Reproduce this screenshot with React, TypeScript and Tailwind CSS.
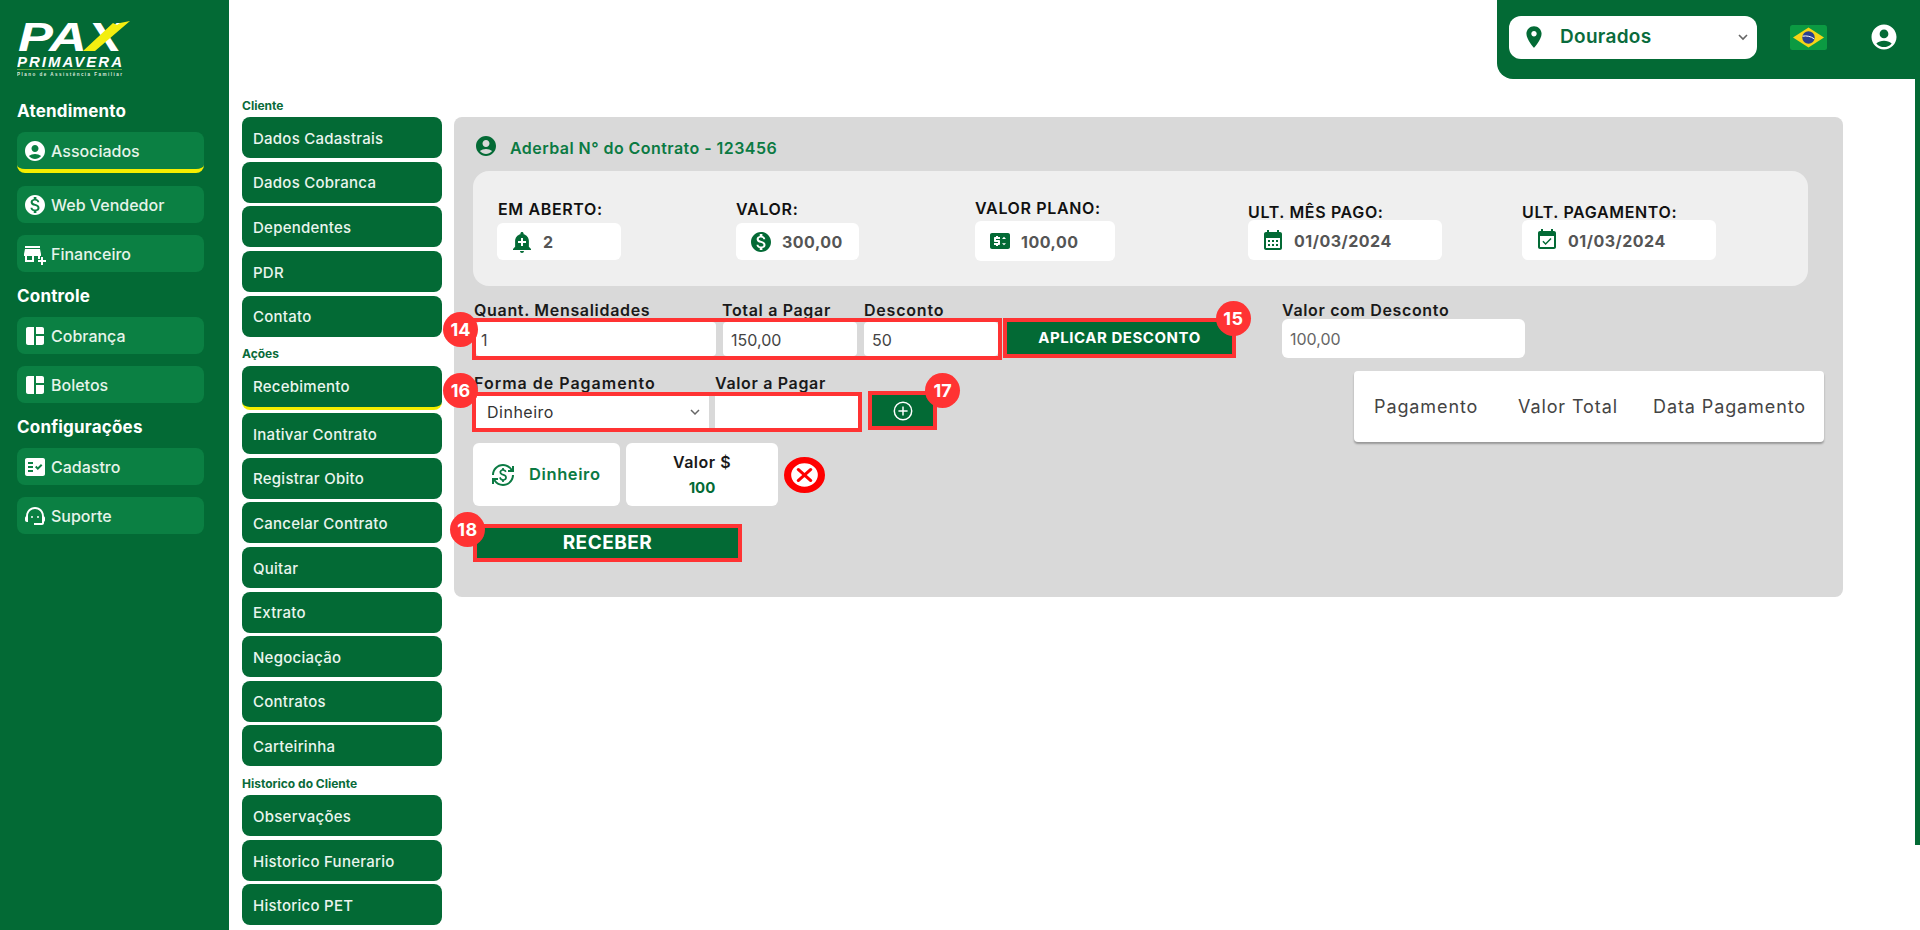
import React from "react";

const P = {
  user: "M12 2C6.48 2 2 6.48 2 12s4.48 10 10 10 10-4.48 10-10S17.52 2 12 2zm0 4c1.93 0 3.5 1.57 3.5 3.5S13.93 13 12 13s-3.5-1.57-3.5-3.5S10.07 6 12 6zm0 14c-2.03 0-4.43-.82-6.14-2.88C7.55 15.8 9.68 15 12 15s4.45.8 6.14 2.12C16.43 19.18 14.03 20 12 20z",
  money: "M12 2C6.48 2 2 6.48 2 12s4.48 10 10 10 10-4.48 10-10S17.52 2 12 2zm1.41 16.09V20h-2.67v-1.93c-1.71-.36-3.16-1.46-3.27-3.4h1.96c.1 1.05.82 1.87 2.65 1.87 1.96 0 2.4-.98 2.4-1.59 0-.83-.44-1.61-2.67-2.14-2.48-.6-4.18-1.62-4.18-3.67 0-1.72 1.39-2.84 3.11-3.21V4h2.67v1.95c1.86.45 2.79 1.86 2.85 3.39H14.3c-.05-1.11-.64-1.87-2.22-1.87-1.5 0-2.4.68-2.4 1.64 0 .84.65 1.39 2.67 1.91s4.18 1.39 4.18 3.91c-.01 1.83-1.38 2.83-3.12 3.16z",
  business: "M15 17h2v-3h1v-2l-1-5H2l-1 5v2h1v6h9v-6h4v3zm-6 1H4v-4h5v4zM2 4h15v2H2zM20 18v-3h-2v3h-3v2h3v3h2v-3h3v-2z",
  dash: "M11 21H5c-1.1 0-2-.9-2-2V5c0-1.1.9-2 2-2h6v18zm2 0h6c1.1 0 2-.9 2-2v-7h-8v9zm8-11V5c0-1.1-.9-2-2-2h-6v7h8z",
  fact: "M20 3H4c-1.1 0-2 .9-2 2v14c0 1.1.9 2 2 2h16c1.1 0 2-.9 2-2V5c0-1.1-.9-2-2-2zM10 17H5v-2h5v2zm0-4H5v-2h5v2zm0-4H5V7h5v2zm4.82 6L12 12.16l1.41-1.41 1.41 1.42L17.99 9l1.42 1.42L14.82 15z",
  support: "M21 12.22C21 6.73 16.74 3 12 3c-4.69 0-9 3.65-9 9.28-.6.34-1 .98-1 1.72v2c0 1.1.9 2 2 2h1v-6.1c0-3.87 3.13-7 7-7s7 3.13 7 7V19h-8v2h8c1.1 0 2-.9 2-2v-1.22c.59-.31 1-.92 1-1.62v-2.3c0-.7-.41-1.31-1-1.64zM9 12a1 1 0 1 0 0 2 1 1 0 0 0 0-2zm6 0a1 1 0 1 0 0 2 1 1 0 0 0 0-2z",
  pin: "M12 2C8.13 2 5 5.13 5 9c0 5.25 7 13 7 13s7-7.75 7-13c0-3.87-3.13-7-7-7zm0 9.5c-1.38 0-2.5-1.12-2.5-2.5s1.12-2.5 2.5-2.5 2.5 1.12 2.5 2.5-1.12 2.5-2.5 2.5z",
  alert: "M10.01 21.01c0 1.1.89 1.99 1.99 1.99s1.99-.89 1.99-1.99h-3.98zm8.87-4.19V11c0-3.25-2.25-5.97-5.29-6.69v-.72C13.59 2.71 12.88 2 12 2s-1.59.71-1.59 1.59v.72C7.37 5.03 5.12 7.75 5.12 11v5.82L3 18.94V20h18v-1.06l-2.12-2.12zM16 13.01h-3v3h-2v-3H8V11h3V8h2v3h3v2.01z",
  price: "M20 4H4c-1.11 0-1.99.89-1.99 2L2 18c0 1.11.89 2 2 2h16c1.11 0 2-.89 2-2V6c0-1.11-.89-2-2-2zM12 10H8v1h3c.55 0 1 .45 1 1v3c0 .55-.45 1-1 1h-1v1H8v-1H6v-2h4v-1H7c-.55 0-1-.45-1-1V9c0-.55.45-1 1-1h1V7h2v1h2v2zm4 6.25l-2-2h4l-2 2zM18 10h-4l2-2.25L18 10z",
  calendar: "M19 4h-1V2h-2v2H8V2H6v2H5c-1.1 0-2 .9-2 2v14c0 1.1.9 2 2 2h14c1.1 0 2-.9 2-2V6c0-1.1-.9-2-2-2zm0 16H5V10h14v10zM9 14H7v-2h2v2zm4 0h-2v-2h2v2zm4 0h-2v-2h2v2zm-8 4H7v-2h2v2zm4 0h-2v-2h2v2zm4 0h-2v-2h2v2z",
  event: "M19 3h-1V1h-2v2H8V1H6v2H5c-1.11 0-2 .9-2 2v14c0 1.1.89 2 2 2h14c1.1 0 2-.9 2-2V5c0-1.1-.9-2-2-2zm0 16H5V8h14v11zM16.53 11.06l-1.06-1.06-4.88 4.88-2.12-2.12-1.06 1.06 3.18 3.18z",
  exchange: "M12.89 11.1c-1.78-.59-2.64-.96-2.64-1.9 0-1.02 1.11-1.39 1.81-1.39 1.31 0 1.79.99 1.9 1.34l1.58-.67c-.15-.44-.82-1.91-2.66-2.23V5h-1.75v1.26c-2.6.56-2.62 2.85-2.62 2.96 0 2.27 2.25 2.91 3.35 3.31 1.58.56 2.28 1.07 2.28 2.03 0 1.13-1.05 1.61-1.98 1.61-1.82 0-2.34-1.87-2.4-2.09l-1.66.67c.63 2.19 2.28 2.78 3.02 2.96V19h1.75v-1.24c.52-.09 3.02-.59 3.02-3.22.01-1.39-.6-2.61-3-3.44zM3 21H1v-6h6v2H4.52c1.61 2.41 4.36 4 7.48 4 4.97 0 9-4.03 9-9h2c0 6.08-4.92 11-11 11-3.72 0-7.01-1.85-9-4.67V21zm-2-9C1 5.92 5.92 1 12 1c3.72 0 7.01 1.85 9 4.67V3h2v6h-6V7h2.48C17.87 4.59 15.12 3 12 3c-4.97 0-9 4.03-9 9H1z",
};

function Ico({ d, className }: { d: string; className: string }) {
  return (
    <svg viewBox="0 0 24 24" fill="currentColor" className={className}>
      <path d={d} />
    </svg>
  );
}

function Logo() {
  return (
    <svg width="116" height="58" viewBox="0 0 116 58" className="block">
      <text x="1" y="31" fontFamily="Liberation Sans" fontWeight="700" fontStyle="italic" fontSize="41" fill="#fff" textLength="104" lengthAdjust="spacingAndGlyphs">PAX</text>
      <polygon points="66,31 78,31 113,1 103,3 100,5 96,3" fill="#f3ee10" />
      <text x="0" y="46.5" fontFamily="Liberation Sans" fontWeight="700" fontStyle="italic" fontSize="15" fill="#fff" textLength="105" lengthAdjust="spacing">PRIMAVERA</text>
      <rect x="0" y="49" width="105" height="0.8" fill="#7fb241" />
      <text x="0" y="56" fontFamily="Liberation Sans" fontWeight="700" fontSize="4.6" fill="#dfe9df" textLength="105" lengthAdjust="spacing">Plano de Assistência Familiar</text>
    </svg>
  );
}

function SideHeading({ children, className }: { children: React.ReactNode; className: string }) {
  return <div className={"h-5 pt-px text-[17px] leading-5 font-bold tracking-[0.2px] text-white " + className}>{children}</div>;
}

function SideBtn({ icon, label, className, active }: { icon: string; label: string; className: string; active?: boolean }) {
  return (
    <div
      className={
        "w-[187px] flex items-center gap-[4px] pl-[6px] rounded-lg bg-[#0b8043] text-[16px] font-medium text-[#e6f4ea] " +
        (active ? "h-[41px] border-b-4 border-[#f5ee00] " : "h-[37px] ") +
        className
      }
    >
      <Ico d={icon} className="w-6 h-6 text-white shrink-0" />
      <span>{label}</span>
    </div>
  );
}

function Sidebar() {
  return (
    <aside className="w-[229px] h-[930px] shrink-0 bg-[#036a35] pl-[17px] pt-5">
      <Logo />
      <SideHeading className="mt-[22px]">Atendimento</SideHeading>
      <SideBtn icon={P.user} label="Associados" active className="mt-3" />
      <SideBtn icon={P.money} label="Web Vendedor" className="mt-[13px]" />
      <SideBtn icon={P.business} label="Financeiro" className="mt-[12px]" />
      <SideHeading className="mt-[13px]">Controle</SideHeading>
      <SideBtn icon={P.dash} label="Cobrança" className="mt-3" />
      <SideBtn icon={P.dash} label="Boletos" className="mt-3" />
      <SideHeading className="mt-[13px]">Configurações</SideHeading>
      <SideBtn icon={P.fact} label="Cadastro" className="mt-3" />
      <SideBtn icon={P.support} label="Suporte" className="mt-3" />
    </aside>
  );
}

function MenuBtn({ label, active }: { label: string; active?: boolean }) {
  return (
    <div
      className={
        "w-[200px] flex items-center pl-[11px] pt-[3px] rounded-lg bg-[#036a35] text-[15px] font-medium tracking-[0.25px] text-[#eaf5ee] " +
        (active ? "h-[44px] border-b-[3px] border-[#f5ee00]" : "h-[41px]")
      }
    >
      {label}
    </div>
  );
}

function MenuTitle({ children, className }: { children: React.ReactNode; className: string }) {
  return <div className={"h-[14px] text-[12px] leading-[14px] font-bold text-[#0a6b3a] " + className}>{children}</div>;
}

function Menu() {
  const a = ["Dados Cadastrais", "Dados Cobranca", "Dependentes", "PDR", "Contato"];
  const b = ["Inativar Contrato", "Registrar Obito", "Cancelar Contrato", "Quitar", "Extrato", "Negociação", "Contratos", "Carteirinha"];
  const c = ["Observações", "Historico Funerario", "Historico PET"];
  return (
    <nav className="w-[200px] h-[846px] ml-[13px] shrink-0 overflow-hidden pt-5">
      <MenuTitle className="mb-1">Cliente</MenuTitle>
      <div className="flex flex-col gap-[3.67px]">
        {a.map((x) => <MenuBtn key={x} label={x} />)}
      </div>
      <MenuTitle className="mt-[10px] mb-[5px]">Ações</MenuTitle>
      <MenuBtn label="Recebimento" active />
      <div className="flex flex-col gap-[3.6px] mt-[3.5px]">
        {b.map((x) => <MenuBtn key={x} label={x} />)}
      </div>
      <MenuTitle className="mt-[11px] mb-1">Historico do Cliente</MenuTitle>
      <div className="flex flex-col gap-[3.6px]">
        {c.map((x) => <MenuBtn key={x} label={x} />)}
      </div>
    </nav>
  );
}

function Badge({ n, className }: { n: number; className: string }) {
  return (
    <div className={"absolute z-10 w-[35px] h-[35px] rounded-full bg-[#ff3333] flex items-center justify-center text-[18px] font-bold text-white " + className}>
      {n}
    </div>
  );
}

function Stat({ label, value, icon, iconCls, colCls, labelCls, boxCls }: { label: string; value: string; icon: string; iconCls: string; colCls: string; labelCls: string; boxCls: string }) {
  return (
    <div className={colCls}>
      <div className={"h-[18px] pt-[2px] text-[16px] leading-[18px] font-semibold tracking-[0.65px] text-[#111] whitespace-nowrap " + labelCls}>{label}</div>
      <div className={"bg-white rounded-md flex items-center text-[16px] font-bold tracking-[0.5px] text-[#555] " + boxCls}>
        <Ico d={icon} className={"text-[#036a35] shrink-0 " + iconCls} />
        <span className="pt-px">{value}</span>
      </div>
    </div>
  );
}

function Label({ children, className }: { children: React.ReactNode; className: string }) {
  return <div className={"h-[18px] pt-px text-[16px] leading-[18px] font-semibold text-[#1a1a1a] whitespace-nowrap " + className}>{children}</div>;
}

function Field({ value, className }: { value: string; className: string }) {
  return (
    <div className={"bg-white rounded flex items-center pt-px text-[16px] text-[#444] " + className}>{value}</div>
  );
}

function Panel() {
  return (
    <section className="w-[1389px] h-[480px] ml-3 mt-[38px] shrink-0 bg-[#d9d9d9] rounded-lg pt-[19px]">
      <div className="flex items-center h-5 pl-[20px] gap-[12px]">
        <Ico d={P.user} className="w-6 h-6 text-[#036a35]" />
        <span className="pt-[3px] text-[16px] font-semibold tracking-[0.45px] text-[#0b7a43]">Aderbal N° do Contrato - 123456</span>
      </div>

      <div className="ml-[19px] mt-[15px] w-[1335px] h-[115px] bg-[#efefef] rounded-2xl flex pl-6">
        <Stat label="EM ABERTO:" value="2" icon={P.alert} colCls="w-[239px] pt-[27px]" labelCls="mb-[7px] pl-px" boxCls="w-[124px] h-[37px] pl-[13px] gap-[9px]" iconCls="w-6 h-6" />
        <Stat label="VALOR:" value="300,00" icon={P.money} colCls="w-[239px] pt-[27px]" labelCls="mb-[7px]" boxCls="w-[123px] h-[37px] pl-[13px] gap-[9px]" iconCls="w-6 h-6" />
        <Stat label="VALOR PLANO:" value="100,00" icon={P.price} colCls="w-[273px] pt-[26px]" labelCls="mb-[6px]" boxCls="w-[140px] h-[40px] pl-[13px] gap-[9px]" iconCls="w-6 h-6" />
        <Stat label="ULT. MÊS PAGO:" value="01/03/2024" icon={P.calendar} colCls="w-[274px] pt-[30px]" labelCls="mb-[1px]" boxCls="w-[194px] h-[40px] pl-[13px] gap-[9px]" iconCls="w-6 h-6" />
        <Stat label="ULT. PAGAMENTO:" value="01/03/2024" icon={P.event} colCls="w-[273px] pt-[30px]" labelCls="mb-[1px]" boxCls="w-[194px] h-[40px] pl-[13px] gap-[9px]" iconCls="w-6 h-6" />
      </div>

      <div className="flex pl-[18px] mt-[14px]">
        <div className="w-[530px]">
          <div className="flex">
            <Label className="w-[250px] pl-[2px] tracking-[0.68px]">Quant. Mensalidades</Label>
            <Label className="w-[142px] tracking-[0.66px]">Total a Pagar</Label>
            <Label className="tracking-[0.8px]">Desconto</Label>
          </div>
          <div className="relative h-[42px] border-4 border-[#ff3333] flex gap-[7px]">
            <Badge n={14} className="-left-[33px] -top-[10px]" />
            <Field value="1" className="w-[240px] h-[34px] pl-[5px]" />
            <Field value="150,00" className="w-[134px] h-[34px] pl-2" />
            <Field value="50" className="w-[134px] h-[34px] pl-2" />
          </div>
        </div>
        <div className="pt-[18px] ml-px">
          <div className="relative w-[233px] h-[40px] border-4 border-[#ff3333] bg-[#036a35] flex items-center justify-center text-[15px] font-bold tracking-[0.54px] text-white">
            APLICAR DESCONTO
            <Badge n={15} className="left-[209px] -top-[21px]" />
          </div>
        </div>
        <div className="ml-[46px]">
          <Label className="tracking-[0.65px]">Valor com Desconto</Label>
          <Field value="100,00" className="w-[243px] h-[39px] mt-px pl-2 rounded-md text-[#666]" />
        </div>
      </div>

      <div className="flex pl-[18px] pr-[19px] pt-[11px]">
        <div className="pt-[2px]">
          <div className="flex">
            <Label className="w-[243px] pl-[2px] tracking-[1px]">Forma de Pagamento</Label>
            <Label className="tracking-[0.66px]">Valor a Pagar</Label>
          </div>
          <div className="relative mt-px w-[390px] h-[40px] border-4 border-[#ff3333] flex gap-[6px]">
            <Badge n={16} className="-left-[33px] -top-[23px]" />
            <div className="w-[233px] h-[32px] bg-white flex items-center justify-between pl-[11px] pr-[6px] text-[16px] tracking-[0.5px] text-[#333]">
              <span>Dinheiro</span>
              <svg viewBox="0 0 24 24" className="w-4 h-4 text-[#666]" fill="none" stroke="currentColor" strokeWidth="2.2"><path d="M6 9l6 6 6-6" /></svg>
            </div>
            <div className="w-[143px] h-[32px] bg-white" />
          </div>
        </div>
        <div className="pt-[20px] ml-[6px]">
          <div className="relative w-[69px] h-[39px] border-4 border-[#ff3333] bg-[#036a35] flex items-center justify-center">
            <svg viewBox="0 0 24 24" className="w-[22px] h-[22px] text-white" fill="none" stroke="currentColor" strokeWidth="1.6"><circle cx="12" cy="12" r="9.5" /><path d="M12 7v10M7 12h10" /></svg>
            <Badge n={17} className="left-[53px] -top-[22px]" />
          </div>
        </div>
        <div className="ml-auto w-[470px] h-[71px] bg-white rounded shadow-[0_2px_2px_rgba(0,0,0,0.3)] flex items-center pl-[20px] text-[18px] tracking-[0.9px] text-[#444]">
          <span className="w-[144px]">Pagamento</span>
          <span className="w-[135px]">Valor Total</span>
          <span>Data Pagamento</span>
        </div>
      </div>

      <div className="flex items-center pl-[19px] mt-px gap-[6px]">
        <div className="w-[147px] h-[63px] bg-white rounded-md flex items-center pl-[18px] gap-[14px]">
          <Ico d={P.exchange} className="w-6 h-6 text-[#0b7a43]" />
          <span className="text-[16.5px] font-semibold tracking-[0.6px] text-[#0b7a43]">Dinheiro</span>
        </div>
        <div className="w-[152px] h-[63px] bg-white rounded-md flex flex-col items-center justify-center gap-2">
          <span className="text-[16px] leading-[18px] font-semibold tracking-[0.5px] text-[#1a1a1a]">Valor $</span>
          <span className="text-[15px] leading-[18px] font-bold text-[#036a35]">100</span>
        </div>
        <svg viewBox="0 0 40 40" preserveAspectRatio="none" className="w-[41px] h-[36px]">
          <circle cx="20" cy="20" r="16.5" fill="#fff" stroke="#ff0000" strokeWidth="7" />
          <path d="M14 14l12 12M26 14l-12 12" stroke="#ff0000" strokeWidth="3.2" strokeLinecap="round" />
        </svg>
      </div>

      <div className="pl-[19px] mt-[18px]">
        <div className="relative w-[269px] h-[38px] border-4 border-[#ff3333] bg-[#036a35] flex items-center justify-center text-[19px] font-bold tracking-[0.5px] text-white">
          RECEBER
          <Badge n={18} className="-left-[27px] -top-[16px]" />
        </div>
      </div>
    </section>
  );
}

function TopBar() {
  return (
    <header className="h-[79px] flex justify-end">
      <div className="w-[418px] h-[79px] bg-[#036a35] rounded-bl-2xl flex items-center pl-3 pb-[5px]">
        <div className="w-[248px] h-[43px] bg-white rounded-xl flex items-center pl-[12px] pr-[6px]">
          <Ico d={P.pin} className="w-[26px] h-[26px] text-[#036a35] shrink-0" />
          <span className="ml-[13px] pt-px text-[19px] font-semibold tracking-[0.3px] text-[#096b3c]">Dourados</span>
          <svg viewBox="0 0 24 24" className="ml-auto w-[16px] h-[16px] text-[#666]" fill="none" stroke="currentColor" strokeWidth="2.4"><path d="M6 9l6 6 6-6" /></svg>
        </div>
        <svg viewBox="0 0 37 25" className="w-[37px] h-[25px] ml-[33px]">
          <rect width="37" height="25" rx="2.5" fill="#0b9a42" />
          <polygon points="18.5,2.5 34,12.5 18.5,22.5 3,12.5" fill="#f7d417" />
          <circle cx="18.5" cy="12.5" r="6.2" fill="#2b3f8f" />
          <path d="M12.6 11.2c4-.8 8.4.2 11.6 2.6" stroke="#fff" strokeWidth="1" fill="none" />
        </svg>
        <Ico d={P.user} className="w-[30px] h-[30px] text-white ml-[42px]" />
      </div>
    </header>
  );
}

export default function App() {
  return (
    <div className="w-[1920px] h-[930px] overflow-hidden bg-white flex [font-family:Inter,'Open_Sans',sans-serif]">
      <Sidebar />
      <div className="w-[1686px] shrink-0">
        <TopBar />
        <div className="flex">
          <Menu />
          <Panel />
        </div>
      </div>
      <div className="w-[5px] h-[845px] bg-[#036a35]" />
    </div>
  );
}
